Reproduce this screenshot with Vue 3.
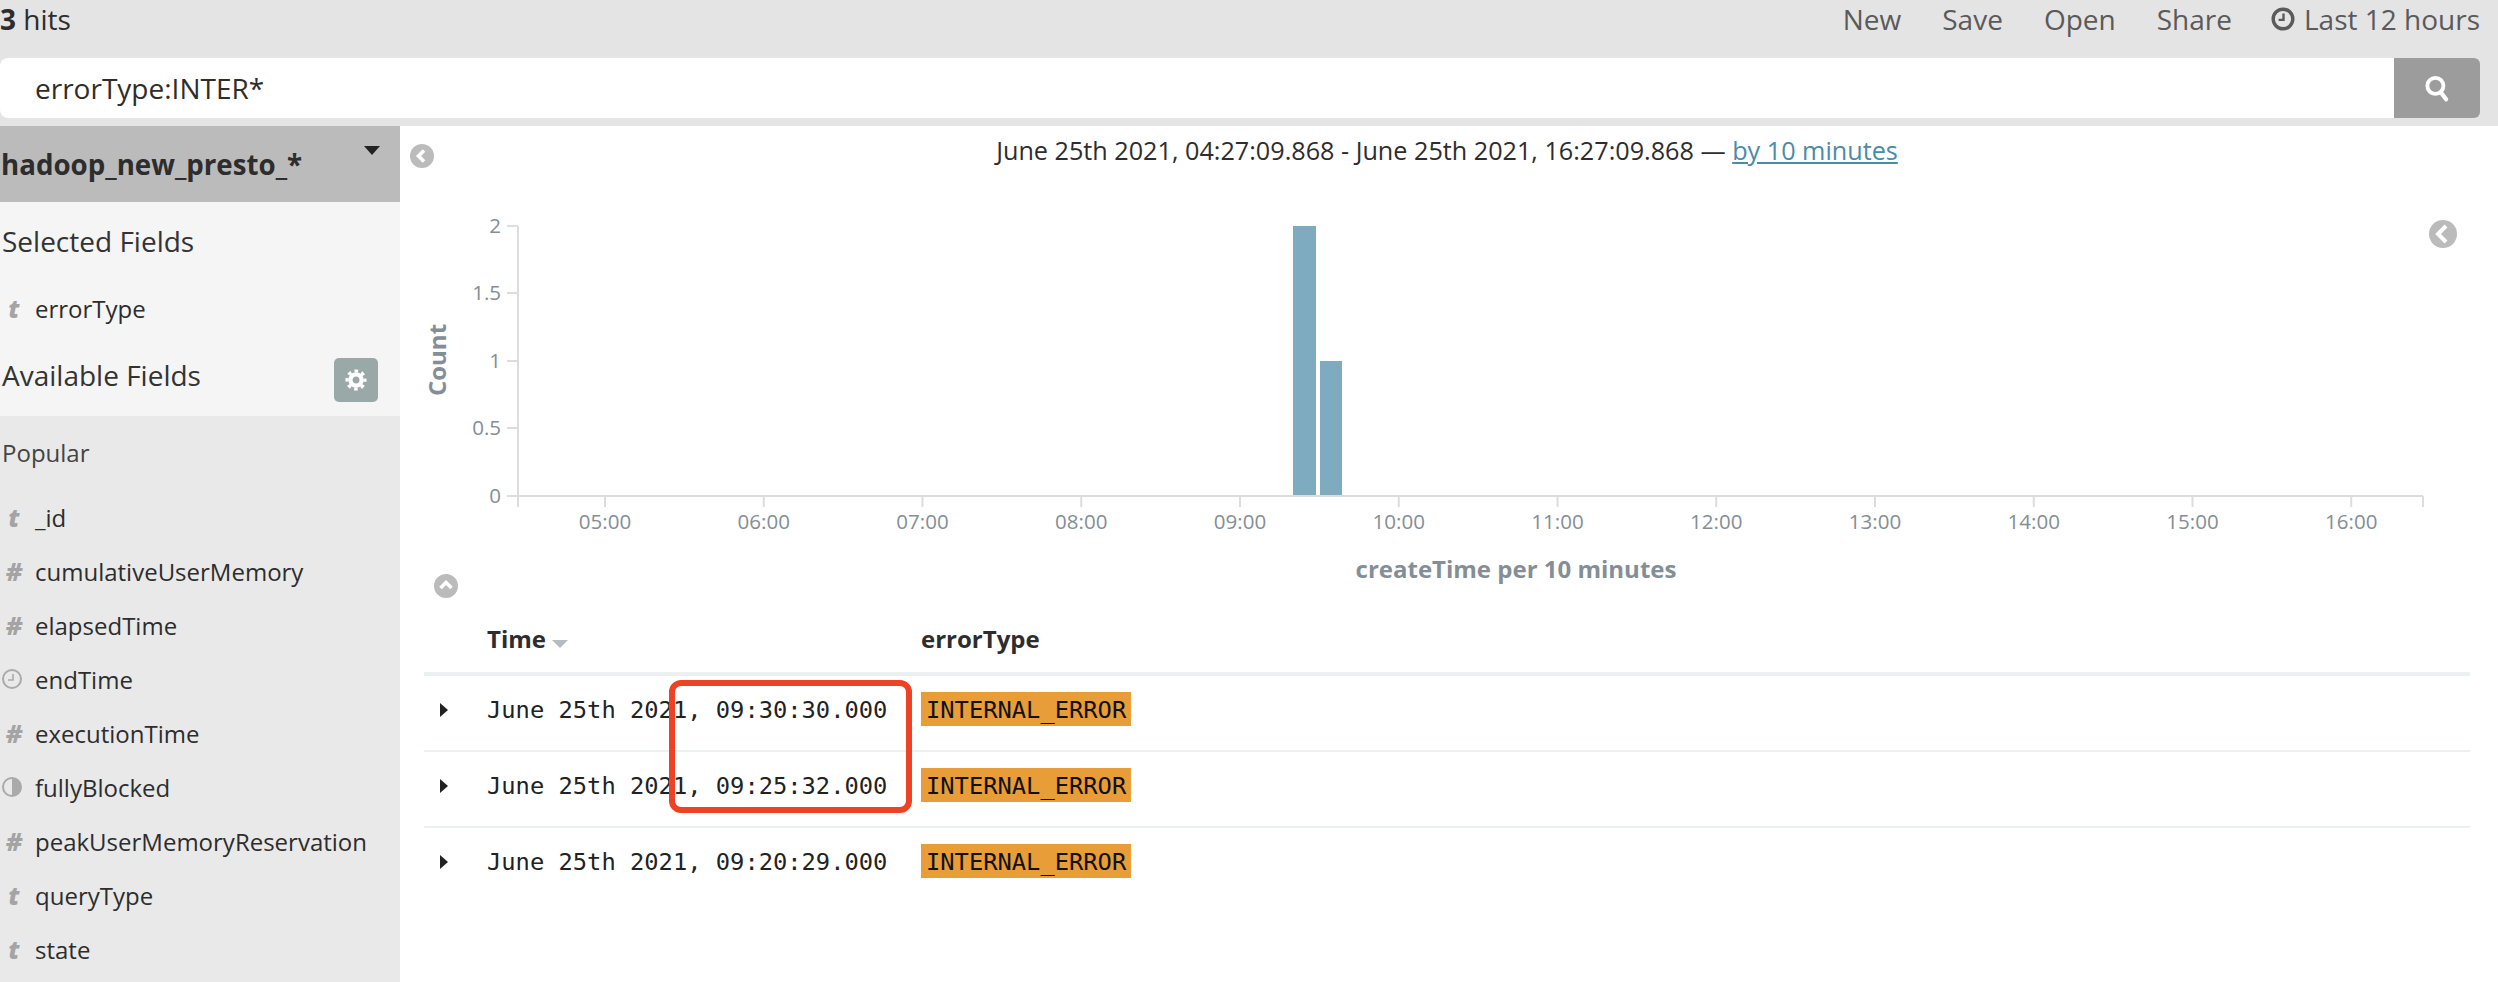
<script setup>
const links = ["New", "Save", "Open", "Share"];

const popular = [
  { type: "t", name: "_id" },
  { type: "n", name: "cumulativeUserMemory" },
  { type: "n", name: "elapsedTime" },
  { type: "d", name: "endTime" },
  { type: "n", name: "executionTime" },
  { type: "b", name: "fullyBlocked" },
  { type: "n", name: "peakUserMemoryReservation" },
  { type: "t", name: "queryType" },
  { type: "t", name: "state" },
];

const rows = [
  "June 25th 2021, 09:30:30.000",
  "June 25th 2021, 09:25:32.000",
  "June 25th 2021, 09:20:29.000",
];

const yTicks = [
  { label: "2", y: 226 },
  { label: "1.5", y: 293 },
  { label: "1", y: 361 },
  { label: "0.5", y: 428 },
  { label: "0", y: 496 },
];

const xTicks = ["05:00", "06:00", "07:00", "08:00", "09:00", "10:00", "11:00", "12:00", "13:00", "14:00", "15:00", "16:00"].map(
  (label, i) => ({ label, x: 605 + i * 158.75 })
);
</script>

<template>
  <div class="page">
    <header class="topbar">
      <div class="nav">
        <span class="hits"><b>3</b> hits</span>
        <div class="links">
          <a v-for="link in links" :key="link">{{ link }}</a>
          <a class="time">
            <svg width="24" height="24" viewBox="0 0 24 24">
              <circle cx="12" cy="12" r="9.8" fill="none" stroke="#5a5a5a" stroke-width="3.4" />
              <path d="M12.5 6.5v6.4H7.6" fill="none" stroke="#5a5a5a" stroke-width="2.4" />
            </svg>
            Last 12 hours
          </a>
        </div>
      </div>
      <div class="search">
        <div class="query">errorType:INTER*</div>
        <button class="go">
          <svg width="30" height="30" viewBox="0 0 28 28">
            <circle cx="12.5" cy="12" r="7.5" fill="none" stroke="#fff" stroke-width="3.6" />
            <path d="M17.5 18l5 6.5" stroke="#fff" stroke-width="4" stroke-linecap="round" />
          </svg>
        </button>
      </div>
    </header>

    <div class="main">
      <aside class="sidebar">
        <div class="index">
          <span>hadoop_new_presto_*</span>
          <i class="caret"></i>
        </div>
        <div class="selected">
          <h3>Selected Fields</h3>
          <div class="field first"><span class="ficon"><em>t</em></span>errorType</div>
          <div class="available">
            <h3>Available Fields</h3>
            <button class="gear">
              <svg width="22" height="22" viewBox="0 0 22 22">
                <circle cx="11" cy="11" r="5.6" fill="none" stroke="#fff" stroke-width="4.2" />
                <circle cx="11" cy="11" r="9" fill="none" stroke="#fff" stroke-width="3.2" stroke-dasharray="3.6 3.47" stroke-dashoffset="1.8" />
              </svg>
            </button>
          </div>
        </div>
        <div class="popular">
          <div class="pop-title">Popular</div>
          <div v-for="f in popular" :key="f.name" class="field">
            <span class="ficon">
              <em v-if="f.type === 't'">t</em>
              <em v-else-if="f.type === 'n'" class="hash">#</em>
              <svg v-else-if="f.type === 'd'" width="22" height="22" viewBox="0 0 22 22">
                <circle cx="11" cy="11" r="9" fill="none" stroke="#aaa" stroke-width="2" />
                <path d="M12 6v6H7" fill="none" stroke="#aaa" stroke-width="1.6" />
              </svg>
              <svg v-else width="22" height="22" viewBox="0 0 22 22">
                <circle cx="11" cy="11" r="9" fill="none" stroke="#aaa" stroke-width="2" />
                <path d="M11 2a9 9 0 0 1 0 18z" fill="#aaa" />
              </svg>
            </span>
            {{ f.name }}
          </div>
        </div>
      </aside>

      <main class="content">
        <div class="title">
          <svg class="collapse-left" width="24" height="24" viewBox="0 0 24 24">
            <circle cx="12" cy="12" r="12" fill="#bbb" />
            <path d="M14 6.5L8.5 12l5.5 5.5" fill="none" stroke="#fff" stroke-width="3.6" />
          </svg>
          <span>June 25th 2021, 04:27:09.868 - June 25th 2021, 16:27:09.868 — <a>by 10 minutes</a></span>
        </div>

        <svg class="chart" width="2098" height="410" viewBox="400 176 2098 410">
          <g fill="#7eabc0">
            <rect x="1293" y="226" width="23" height="270" />
            <rect x="1320" y="361" width="22" height="135" />
          </g>
          <g stroke="#ddd" stroke-width="2">
            <path d="M518 226V507M518 496H2423" />
            <path v-for="t in yTicks" :key="t.label" :d="`M507 ${t.y}H518`" />
            <path d="M2423 496V507" />
            <path v-for="t in xTicks" :key="t.label" :d="`M${t.x} 496V507`" />
          </g>
          <g class="tick" text-anchor="end">
            <text v-for="t in yTicks" :key="t.label" x="501" :y="t.y + 7">{{ t.label }}</text>
          </g>
          <g class="tick" text-anchor="middle">
            <text v-for="t in xTicks" :key="t.label" :x="t.x" y="529">{{ t.label }}</text>
          </g>
          <text class="axis" x="1516" y="578" text-anchor="middle">createTime per 10 minutes</text>
          <text class="axis" transform="translate(446 360) rotate(-90)" text-anchor="middle">Count</text>
          <circle cx="2443" cy="234" r="14" fill="#bbb" />
          <path d="M2446 226l-8 8 8 8" fill="none" stroke="#fff" stroke-width="4" />
        </svg>

        <div class="results">
          <svg class="collapse-up" width="24" height="24" viewBox="0 0 24 24">
            <circle cx="12" cy="12" r="12" fill="#bbb" />
            <path d="M6.5 14L12 8.5l5.5 5.5" fill="none" stroke="#fff" stroke-width="3.6" />
          </svg>
          <div class="table">
            <div class="row head">
              <span></span>
              <span>Time <i class="sort"></i></span>
              <span>errorType</span>
            </div>
            <div v-for="r in rows" :key="r" class="row">
              <span class="expand"><i></i></span>
              <span class="mono">{{ r }}</span>
              <span class="mono"><mark>INTERNAL_ERROR</mark></span>
            </div>
            <div class="callout"></div>
          </div>
        </div>
      </main>
    </div>
  </div>
</template>

<style scoped>
.page {
  width: 2498px;
  height: 982px;
  overflow: hidden;
  background: #fff;
  color: #2d2d2d;
  font-family: "Open Sans", "Noto Sans", sans-serif;
  font-size: 24px;
}

.topbar {
  height: 126px;
  background: #e4e4e4;
  box-sizing: border-box;
}

.nav {
  height: 58px;
  display: flex;
  justify-content: space-between;
  padding-right: 18px;
  font-size: 28px;
  line-height: 38px;
}

.hits b {
  font-weight: 700;
}

.links {
  display: flex;
  gap: 41px;
  color: #5a5a5a;
}

.time {
  display: flex;
  align-items: center;
  height: 38px;
  gap: 9px;
  margin-left: -2px;
}

.search {
  display: flex;
  margin-right: 18px;
  height: 60px;
}

.query {
  flex: 1;
  background: #fff;
  border-radius: 8px 0 0 8px;
  padding-left: 35px;
  font-size: 28px;
  line-height: 60px;
}

.go {
  width: 86px;
  border: 0;
  padding: 0;
  background: #9c9c9c;
  border-radius: 0 6px 6px 0;
  display: flex;
  align-items: center;
  justify-content: center;
}

.main {
  display: flex;
  height: 856px;
}

.sidebar {
  width: 400px;
  flex: none;
  background: #e9e9e9;
}

.index {
  height: 76px;
  background: #bbb;
  box-sizing: border-box;
  padding-left: 1px;
  position: relative;
  font-size: 27.7px;
  font-weight: 700;
  line-height: 76px;
}

.caret {
  position: absolute;
  left: 364px;
  top: 20px;
  border-left: 8px solid transparent;
  border-right: 8px solid transparent;
  border-top: 9px solid #222;
}

.selected {
  height: 214px;
  background: #f5f5f5;
  box-sizing: border-box;
  padding-top: 19px;
}

h3 {
  margin: 0;
  padding-left: 2px;
  font-size: 28px;
  font-weight: 400;
  line-height: 40px;
  color: #333;
}

.field {
  display: flex;
  align-items: center;
  height: 54px;
  font-size: 24px;
}

.field.first {
  height: 50px;
  margin-top: 22px;
}

.ficon {
  width: 28px;
  margin-right: 7px;
  flex: none;
  display: flex;
  justify-content: center;
  color: #a4a4a4;
}

.ficon em {
  font-family: "Open Sans", sans-serif;
  font-weight: 800;
  font-size: 24px;
}

.ficon em.hash {
  font-size: 25px;
}

.ficon svg {
  margin-left: -4px;
}

.available {
  display: flex;
  justify-content: space-between;
  align-items: flex-start;
  padding-right: 22px;
  margin-top: 22px;
}

.gear {
  width: 44px;
  height: 44px;
  margin-top: 3px;
  border: 0;
  padding: 0;
  border-radius: 5px;
  background: #9aa8a8;
  display: flex;
  align-items: center;
  justify-content: center;
}

.popular {
  padding-top: 17px;
}

.pop-title {
  padding-left: 2px;
  font-size: 24px;
  line-height: 40px;
  color: #444;
  margin-bottom: 17px;
}

.content {
  width: 2098px;
}

.title {
  height: 50px;
  position: relative;
  text-align: center;
  line-height: 48px;
  padding-right: 4px;
  box-sizing: border-box;
  font-size: 25.2px;
}

.title a {
  color: #4a8ba6;
  text-decoration: underline;
}

.collapse-left {
  position: absolute;
  left: 10px;
  top: 18px;
}

.chart {
  display: block;
}

.tick {
  font-size: 20.5px;
  fill: #848e96;
}

.axis {
  font-size: 24px;
  font-weight: 700;
  fill: #848e96;
}

.results {
  position: relative;
  padding-top: 14px;
}

.collapse-up {
  position: absolute;
  left: 34px;
  top: -12px;
}

.table {
  position: relative;
  margin-left: 24px;
  width: 2046px;
}

.row {
  display: grid;
  grid-template-columns: 63px 434px 1fr;
  height: 76px;
  box-sizing: border-box;
  border-bottom: 2px solid #ecf0f1;
  padding-top: 16px;
}

.row:nth-last-child(2) {
  border-bottom: 0;
}

.row.head {
  height: 76px;
  border-bottom-width: 4px;
  padding-top: 21px;
  font-weight: 700;
  line-height: 36px;
}

.sort {
  display: inline-block;
  vertical-align: 0;
  border-left: 8px solid transparent;
  border-right: 8px solid transparent;
  border-top: 8px solid #b4bcc2;
}

.expand {
  position: relative;
}

.expand i {
  position: absolute;
  left: 16px;
  top: 11px;
  border-top: 7px solid transparent;
  border-bottom: 7px solid transparent;
  border-left: 8px solid #222;
}

.mono {
  font-family: "DejaVu Sans Mono", "Liberation Mono", monospace;
  font-size: 23.75px;
  line-height: 36px;
  color: #222;
}

mark {
  display: inline-block;
  height: 34px;
  line-height: 36px;
  padding: 0 5px;
  background: #e89d38;
  color: #111;
}

.callout {
  position: absolute;
  left: 245px;
  top: 80px;
  width: 243px;
  height: 133px;
  box-sizing: border-box;
  border: 6px solid #ee4126;
  border-radius: 12px;
}
</style>
